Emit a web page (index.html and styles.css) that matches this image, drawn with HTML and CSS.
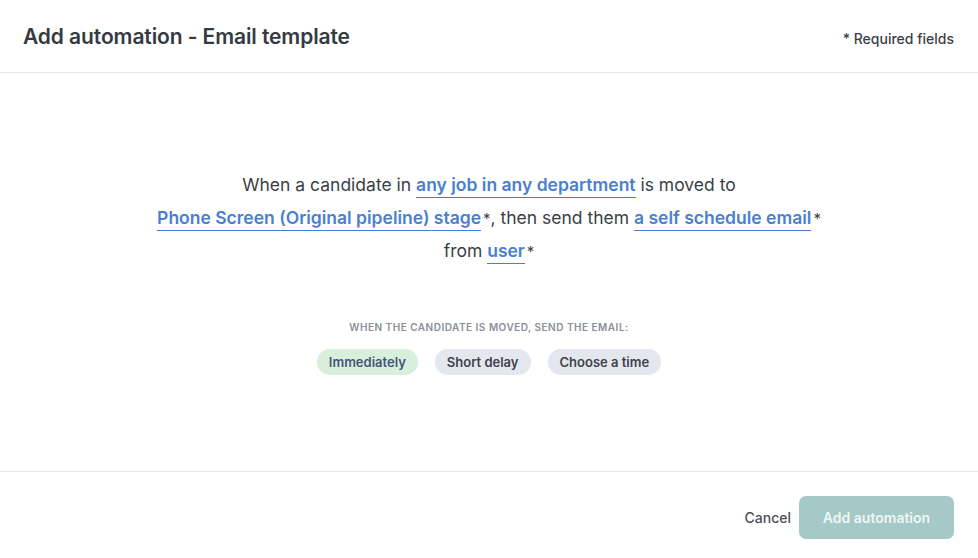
FILE: index.html
```html
<!DOCTYPE html>
<html>
<head>
<meta charset="utf-8">
<link rel="stylesheet" href="styles.css">
</head>
<body>
<div class="modal">
  <header class="header">
    <h1 class="title">Add automation - Email template</h1>
    <span class="required">* Required fields</span>
  </header>
  <main class="body">
    <p class="sentence">When a candidate in <a class="link">any job in any department</a> is moved to<br><a class="link">Phone Screen (Original pipeline) stage</a><span class="ast">*</span>, then send them <a class="link">a self schedule email</a><span class="ast">*</span><br>from <a class="link">user</a><span class="ast">*</span></p>
    <div class="label">When the candidate is moved, send the email:</div>
    <div class="chips">
      <span class="chip active">Immediately</span>
      <span class="chip">Short delay</span>
      <span class="chip">Choose a time</span>
    </div>
  </main>
  <footer class="footer">
    <button class="cancel">Cancel</button>
    <button class="primary">Add automation</button>
  </footer>
</div>
</body>
</html>
```
FILE: styles.css
```css
* { box-sizing: border-box; }
html, body { margin: 0; padding: 0; background: #fff; }
body { font-family: Inter, "Noto Sans", sans-serif; color: #3a3f47; }
.modal { width: 978px; height: 558px; display: flex; flex-direction: column; }
.header {
  height: 73px;
  border-bottom: 1px solid #e4e6ea;
  display: flex;
  align-items: center;
  justify-content: space-between;
  padding: 0 24px 0 23px;
}
.title { margin: 0; font-size: 21px; font-weight: 600; color: #353a42; letter-spacing: -0.1px; }
.required { font-size: 14px; font-weight: 500; color: #3a3f47; position: relative; top: 2px; }
.body {
  height: 399px;
  border-bottom: 1px solid #e4e6ea;
  display: flex;
  flex-direction: column;
  align-items: center;
  padding-top: 96px;
}
.sentence {
  margin: 0;
  text-align: center;
  font-size: 17.5px;
  line-height: 32.5px;
  color: #3a3f47;
}
.link {
  color: #4a7fd0;
  font-weight: 600;
  border-bottom: 1.5px solid #4a7fd0;
  padding-bottom: 2px;
}
.ast { color: #3a3f47; margin-left: 2px; font-size: 15px; }
.label {
  margin-top: 52px;
  font-size: 10px;
  font-weight: 600;
  letter-spacing: 0.5px;
  text-transform: uppercase;
  color: #8a8f98;
}
.chips { display: flex; gap: 17px; margin-top: 16px; }
.chip {
  height: 26px;
  display: inline-flex;
  align-items: center;
  padding: 0 12px;
  border-radius: 13px;
  background: #e4e7ed;
  font-size: 13px;
  font-weight: 600;
  color: #3e434b;
}
.chip.active { background: #d8f0db; color: #45557a; }
.footer {
  flex: 1;
  display: flex;
  align-items: center;
  justify-content: flex-end;
  padding: 4px 24px 0 0;
  gap: 8px;
}
.cancel {
  background: none;
  border: none;
  font-family: inherit;
  font-size: 14px;
  font-weight: 500;
  color: #4a4f57;
  padding: 0;
}
.primary {
  width: 155px;
  height: 43px;
  border: none;
  border-radius: 7px;
  background: #a4c9c6;
  color: #eef6f5;
  font-family: inherit;
  font-size: 14px;
  font-weight: 600;
}
```
